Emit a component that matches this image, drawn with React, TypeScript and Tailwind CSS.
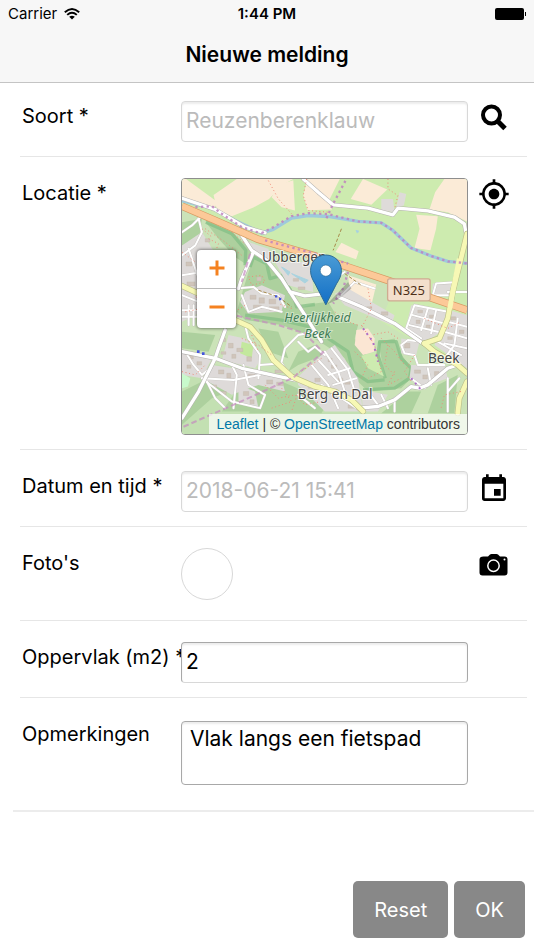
import React, { useState } from "react";
import { MdEvent, MdMyLocation } from "react-icons/md";

const farmland = [
  "M95 48L165 0H335L300 20L262 60L215 86L150 112L105 92Z",
  "M378 0H475L440 70L452 92L378 94L365 50Z",
  "M288 18L335 4L340 95L300 85L270 55Z",
  "M508 60L545 0L618 32L570 78Z",
  "M790 0H858V128L800 100L745 92L762 40Z",
  "M705 108L770 112L765 150L748 215L700 208L715 150Z",
  "M480 192L532 218L524 242L462 220Z",
  "M500 290L585 318L572 372L505 335Z",
];

const forest = [
  "M70 128L150 160L205 210L260 230L270 262L330 330L352 390L400 375L440 370L470 420L530 440L520 480L560 540L612 600L590 490L640 480L655 520L690 570L680 610L660 630L560 640L510 590L490 540L430 500L380 470L300 440L190 425L165 400L185 330L205 265L160 235L110 180Z",
  "M190 600L330 640L340 700H120Z",
  "M350 560L430 530L400 500L350 520L320 580Z",
  "M680 640L720 640L690 705H600Z",
  "M0 130L60 120L50 190L0 200Z",
  "M0 460L100 470L80 520L0 510Z",
  "M80 600L140 640L90 660L0 740V640Z",
  "M230 450L290 460L320 540L260 520Z",
  "M240 640L300 610L440 670L420 705H200Z",
  "M770 620L830 590L820 705H740Z",
];

const builtUp = [
  "M0 200L60 160L100 225L110 320L60 400L0 430Z",
  "M200 190L260 210L270 250L220 230Z",
  "M190 340L240 320L310 350L300 400L200 405L175 370Z",
  "M280 250L390 250L395 340L320 320Z",
  "M460 345L500 330L640 410L630 440L490 380Z",
  "M690 380L800 400L780 460L735 490L670 465Z",
  "M805 395L858 410V570L760 500Z",
  "M660 480L715 490L705 530L660 525Z",
  "M690 560L790 560L800 600L715 630L685 600Z",
  "M430 520L460 500L530 600L545 700H430L350 620L345 600Z",
  "M140 470L190 480L240 540L220 570L120 545Z",
  "M90 560L190 575L300 600L310 640L230 620L150 650L60 600Z",
  "M0 520L90 540L60 600L0 590Z",
  "M170 620L220 640L230 690L170 670Z",
  "M600 60L635 60L640 100L600 95Z",
  "M655 40L675 45L668 80L645 85Z",
  "M755 315L812 310L805 350L752 348Z",
  "M540 635L620 650L590 700L545 700Z",
];

// Narrow residential streets
const streets = [
  "M0 230L40 200L60 160L50 120",
  "M0 290L60 280M20 210L60 330M0 350L50 370M0 395H50M0 415H50M20 380V440M35 380V440",
  "M0 160L30 140L60 110",
  "M10 520L35 560L60 590L90 565",
  "M70 600L100 660L130 690",
  "M150 560L165 590L155 690",
  "M60 600L155 605L235 590",
  "M185 560L200 620L250 650L235 690L150 670L60 600",
  "M190 440L200 480L235 530L230 600",
  "M235 560L300 555L330 600",
  "M300 550L310 510L350 470L400 460",
  "M350 490L380 520L400 505L430 530",
  "M390 560L440 620L470 690",
  "M430 520L470 580L490 640M450 510L500 575L520 640M410 545L470 610",
  "M350 650L400 690M420 620L540 700M440 590L505 570M455 620L525 600",
  "M160 330L215 325L240 345L290 350L310 385M180 350L200 400L240 385L300 400",
  "M460 300L490 280M480 350L520 310L580 330",
  "M700 380L675 450L720 480M700 380L800 400M695 410L790 435M685 440L770 460M740 390L720 455M765 395L750 465",
  "M800 430L858 445M790 460L858 480M830 420L820 500L790 540M770 490L840 530M858 510L790 495",
  "M720 490L680 485L660 500L670 525L700 530L710 560L790 560",
  "M690 600L730 630L790 580M740 570L750 620M800 600V700M835 600L800 640",
  "M755 350L765 315L812 312M800 340H858M755 350H800",
  "M560 640L590 680M600 650L620 690M640 660V700",
];

const mainRoads = [
  "M0 58L100 92L190 145L250 162",
  "M180 170L210 215L255 245L300 300L325 340L370 352L430 345",
  "M215 220L180 300L170 330",
  "M470 355L540 385L640 435L725 495",
  "M365 0L410 40L455 78L560 88L635 108L650 88L740 96L820 115L850 135L858 180",
  "M130 455L110 510L100 540L50 640L0 720",
  "M0 520L100 540L180 570L280 592L340 605",
  "M530 690L590 685L640 665L690 625L715 630L740 620L800 570L830 560",
  "M325 340L370 410L420 490",
];

const yellowRoads = [
  "M0 322L50 345",
  "M160 425L205 445L240 485L275 545L330 595L400 625L460 640L510 665L545 700",
  "M858 165L835 260L815 340L800 420L775 480L730 495",
  "M730 495L760 520L830 560L858 585",
  "M858 610L835 660L830 705",
];

const footpaths = [
  "M150 160L190 195M70 150L130 190L180 230M200 295L240 290L250 310L210 320Z",
  "M260 5L290 60L330 105M375 0L365 50L380 95L440 100",
  "M620 0V30L650 50L640 90",
  "M80 180L110 195L100 220M60 150L90 175",
  "M540 440L580 500L600 580L560 600M600 480L640 520L670 560M620 500L610 560L640 590",
  "M520 520L560 560L540 600M460 400L500 430L530 440M560 330L570 390L540 450",
  "M250 620L290 660L340 650L370 680L420 670M270 690L330 670L300 630M350 640L330 700",
  "M0 580L40 590L70 560M180 480L230 500L270 530M210 470L230 520",
  "M640 580L620 620L660 600M700 530L670 580L690 610M650 480L620 460L570 470",
  "M10 400L60 390L40 350M0 220L40 250M190 380L160 400M330 390L290 375",
  "M840 640L790 650L780 690M730 420L800 450L840 430M420 540L340 590",
];

const buildings = [
  "M205 350h18v12h-18zM232 358h16v16h-16zM262 362h20v14h-20zM215 380h24v10h-24zM262 385h30v10h-30z",
  "M115 480h16v10h-16zM140 495h14v14h-14zM165 510h18v10h-18zM150 528h12v12h-12zM195 535h14v14h-14zM118 520h14v8h-14z",
  "M110 575h16v12h-16zM135 585h12v14h-12zM200 588h20v8h-20zM255 605h18v12h-18zM285 612h20v10h-20zM280 575h24v9h-24z",
  "M20 530h14v12h-14zM45 550h14v10h-14zM15 560h12v10h-12zM90 620h14v10h-14zM115 640h18v10h-18zM185 640h16v12h-16zM205 665h12v12h-12z",
  "M12 250h18v12h-18zM15 310h24v12h-24zM70 180h14v10h-14zM225 295h14v12h-14zM335 300h16v8h-16zM350 325h20v8h-20z",
  "M440 540h12v10h-12zM450 560h16v10h-16zM470 600h14v10h-14zM490 610h16v8h-16zM400 600h16v10h-16zM380 620h14v10h-14zM500 680h18v10h-18z",
  "M710 395h14v8h-14zM745 410h12v8h-12zM705 425h12v10h-12zM735 440h12v8h-12zM810 415h14v10h-14zM835 455h14v10h-14zM800 475h14v8h-14z",
  "M700 575h18v10h-18zM725 590h14v12h-14zM760 580h14v12h-14zM670 495h16v14h-16zM555 385h16v8h-16zM600 400h20v10h-20z",
];

const MapTiles = () => (
  <svg
    viewBox="0 0 858 768"
    preserveAspectRatio="xMidYMid slice"
    className="block h-full w-full"
    fill="none"
    aria-hidden="true"
  >
    <rect width="858" height="768" fill="#cdebb0" />
    <path
      d="M0 90L200 175L430 240L640 320L600 430L720 500L858 560V768H0Z"
      fill="#cbe3b8"
    />
    <path d="M0 540L330 600L540 700V768H0Z" fill="#c3e0b2" />
    <g fill="#fbecd7">
      {farmland.map((d) => (
        <path key={d} d={d} />
      ))}
    </g>
    <path d="M0 0H12L110 72L95 88L0 56Z" fill="#fbecd7" />
    <g fill="#add19e">
      {forest.map((d) => (
        <path key={d} d={d} />
      ))}
    </g>
    <path
      d="M72 130L150 165L192 215L190 260M205 265L215 235L255 255L265 300L300 290L335 350L345 385L400 378M190 410L300 425L385 445M440 480L500 520L515 580L560 610L610 605M545 635L640 630L685 600L690 570L660 540L645 490L595 490L590 530L612 600"
      stroke="#84bf85"
      strokeWidth="10"
      strokeLinejoin="round"
      opacity=".75"
    />
    <g fill="#dedbd9">
      {builtUp.map((d) => (
        <path key={d} d={d} />
      ))}
    </g>
    <path d="M525 455L560 450L580 480L578 520L545 530L520 500Z" fill="#fbe6d3" />
    <path d="M540 532L580 522L608 595L560 570Z" fill="#cdebb0" />
    <path d="M180 490L215 500L210 540L175 525Z" fill="#c3e89d" />
    <path d="M0 585L25 600L18 625L0 630Z" fill="#c8facc" />
    <path
      d="M300 265l25 15l-5 10zM330 285l50 20l-10 8zM524 155l8 2l-4 6z"
      fill="#aad3df"
      stroke="#aad3df"
      strokeWidth="3"
    />
    <g fill="#d0c5bb" stroke="#bfb3a8" strokeWidth="1">
      {buildings.map((d) => (
        <path key={d} d={d} />
      ))}
    </g>

    {/* Canal along the top */}
    <path
      d="M0 66L90 88L160 125L240 163L275 152L330 118L380 110L440 113L530 128L600 132L635 155L690 208L750 232L800 248L858 254"
      stroke="#9fcbdc"
      strokeWidth="10"
      strokeLinejoin="round"
    />

    <g strokeLinejoin="round" strokeLinecap="round">
      <g stroke="#c5c1be" strokeWidth="8">
        {streets.map((d) => (
          <path key={d} d={d} />
        ))}
      </g>
      <g stroke="#fff" strokeWidth="6">
        {streets.map((d) => (
          <path key={d} d={d} />
        ))}
      </g>
      <g stroke="#b5b2b0" strokeWidth="13">
        {mainRoads.map((d) => (
          <path key={d} d={d} />
        ))}
      </g>
      <g stroke="#fff" strokeWidth="10">
        {mainRoads.map((d) => (
          <path key={d} d={d} />
        ))}
      </g>
      <g stroke="#bcc08a" strokeWidth="18">
        {yellowRoads.map((d) => (
          <path key={d} d={d} />
        ))}
      </g>
      <g stroke="#f7f8b5" strokeWidth="14">
        {yellowRoads.map((d) => (
          <path key={d} d={d} />
        ))}
      </g>
    </g>
    <path d="M0 82L100 125L230 182L400 232L520 272L640 312L750 358L858 395" stroke="#d79a62" strokeWidth="23" />
    <path d="M0 82L100 125L230 182L400 232L520 272L640 312L750 358L858 395" stroke="#fcc998" strokeWidth="19" />
    <path d="M835 240L815 340L806 392" stroke="#f7f8b5" strokeWidth="15" />

    <g stroke="#ee8a78" strokeWidth="3" strokeDasharray="3 8">
      {footpaths.map((d) => (
        <path key={d} d={d} />
      ))}
    </g>
    <path
      d="M230 335L290 355L330 385M480 150L455 215M490 285L540 320"
      stroke="#a88a4a"
      strokeWidth="3"
      strokeDasharray="10 6"
    />
    {/* Municipal boundaries */}
    <g stroke="#bf83bf" strokeWidth="7" strokeDasharray="7 10" opacity=".85">
      <path d="M240 163L275 145L330 112L380 103L440 106L530 128L600 132L635 155L690 208L750 232L800 248L858 254" />
      <path d="M435 118L455 75L495 0" />
      <path d="M40 85L90 82L120 105L180 145L240 165" />
      <path d="M250 185L400 225L500 255" />
      <path d="M500 280L485 330L455 375" />
    </g>
    <g stroke="#c58bbf" strokeWidth="6" strokeDasharray="17 9" opacity=".7">
      <path d="M205 225L180 310" />
      <path d="M165 412L290 440L370 465L425 522L335 598L200 660L0 748" />
    </g>
    <path
      d="M545 450L575 490L590 550M690 600L720 635"
      stroke="#ad6ec6"
      strokeWidth="6"
      strokeDasharray="6 12"
    />
    <path d="M45 516h8v8h-8zM60 522h8v8h-8zM280 350h7v7h-7zM292 358h7v7h-7z" fill="#4455dd" />
    <path d="M436 378L500 310L510 330L470 362Z" fill="#444" opacity=".3" />

    <rect x="619" y="301" width="128" height="66" rx="6" fill="#f3dfcc" stroke="#cfab91" strokeWidth="4" />
    <g
      fontFamily="'Noto Sans', sans-serif"
      fontSize="41"
      textAnchor="middle"
      stroke="#fff"
      strokeOpacity=".7"
      strokeWidth="6"
      paintOrder="stroke"
      fill="#444"
    >
      <text x="241" y="250" textAnchor="start">
        Ubbergen
      </text>
      <text x="461" y="664">Berg en Dal</text>
      <text x="788" y="555">Beek</text>
      <g fill="#3d7a55" fontStyle="italic" fontSize="38" strokeOpacity=".4">
        <text x="408" y="430">Heerlijkheid</text>
        <text x="408" y="479">Beek</text>
      </g>
      <text x="683" y="348" fontSize="39" fill="#4d2f18" stroke="none">
        N325
      </text>
    </g>

    {/* Marker */}
    <defs>
      <linearGradient id="pin" x1="0" y1="0" x2="0" y2="1">
        <stop offset="0" stopColor="#4a9bd5" />
        <stop offset="1" stopColor="#126fc6" />
      </linearGradient>
    </defs>
    <path
      d="M433 229C406 229 387 250 387 276C387 292 393 303 401 316L433 379L465 316C473 303 480 292 480 276C480 250 460 229 433 229Z"
      fill="url(#pin)"
      stroke="#2e6c97"
      strokeWidth="3"
    />
    <circle cx="433" cy="276" r="17" fill="#fff" stroke="#2e6c97" strokeWidth="2" />
  </svg>
);

const LocationMap = () => (
  <div className="relative h-[257px] overflow-hidden rounded-[4px] border border-[#8e8e8e]">
    <MapTiles />
    <div className="absolute left-[15px] top-[71px] flex flex-col rounded-[4px] bg-white shadow-[0_0_3px_1px_rgba(0,0,0,0.4)]">
      <button
        type="button"
        aria-label="Zoom in"
        className="flex h-[39px] w-[39px] items-center justify-center border-b border-[#bbb] pb-[2px]"
      >
        <svg viewBox="0 0 16 16" className="h-4 w-4" stroke="#f58220" strokeWidth="3">
          <path d="M8 0.5v15M0.5 8h15" />
        </svg>
      </button>
      <button
        type="button"
        aria-label="Zoom out"
        className="flex h-[39px] w-[39px] items-center justify-center pb-[2px]"
      >
        <svg viewBox="0 0 16 16" className="h-4 w-4" stroke="#f58220" strokeWidth="3">
          <path d="M0.5 7h15" />
        </svg>
      </button>
    </div>
    <p className="absolute bottom-0 right-0 whitespace-nowrap bg-white/70 px-[7px] font-['Liberation_Sans',sans-serif] text-[14px] leading-[20px] text-[#333]">
      <a href="#" className="text-[#0078a8]">
        Leaflet
      </a>{" "}
      | ©{" "}
      <a href="#" className="text-[#0078a8]">
        OpenStreetMap
      </a>{" "}
      contributors
    </p>
  </div>
);

const SearchIcon = () => (
  <svg viewBox="0 0 32 32" className="h-8 w-8" fill="none" stroke="currentColor">
    <circle cx="13.5" cy="14" r="8.5" strokeWidth="4" />
    <path d="M19.5 20L27 27.5" strokeWidth="5" />
  </svg>
);

const CameraIcon = () => (
  <svg viewBox="0 0 32 32" className="h-8 w-8">
    <path
      d="M5.5 8.500H10L12 6.600Q12.600 6 13.500 6H18.500Q19.400 6 20 6.600L22 8.500H26.500Q29.500 8.500 29.500 11.500V24.500Q29.500 27.500 26.500 27.500H4.500Q1.500 27.500 1.500 24.500V11.500Q1.500 8.500 5.500 8.500Z"
      fill="currentColor"
    />
    <circle cx="15.500" cy="17.800" r="5.700" fill="none" stroke="#fff" strokeWidth="1.500" />
    <rect x="25.500" y="10.500" width="2" height="2" rx="1" fill="#fff" />
  </svg>
);

const WifiIcon = () => (
  <svg viewBox="0 0 16 12" className="h-3 w-4" fill="none" stroke="#000" strokeWidth="1.9">
    <path d="M0.8 4.3Q8 -2.3 15.2 4.3M3.2 6.9Q8 2.5 12.8 6.9" />
    <path d="M8 11.5L5.2 8.8Q8 6.6 10.8 8.8Z" fill="#000" stroke="none" />
  </svg>
);

interface RowProps {
  label: string;
  htmlFor?: string;
  action?: React.ReactNode;
  className: string;
  children: React.ReactNode;
}

const Row = ({ label, htmlFor, action, className, children }: RowProps) => (
  <div className={`mx-[7px] flex items-start ${className}`}>
    <label
      htmlFor={htmlFor}
      className="w-[161px] shrink-0 whitespace-nowrap pl-[2px] leading-[30px]"
    >
      {label}
    </label>
    <div className="min-w-0 flex-1">{children}</div>
    <div className="mr-[7px] flex w-[52px] shrink-0 justify-center">{action}</div>
  </div>
);

const divider = "border-b border-[#e6e6e6]";
const field =
  "block w-full rounded-[4px] border bg-white text-[21px] shadow-[inset_0_2px_2px_rgba(0,0,0,0.08)] outline-none placeholder:text-[#bbb]";

const App = () => {
  const [area, setArea] = useState("2");
  const [remarks, setRemarks] = useState("Vlak langs een fietspad");

  return (
    <div className="flex min-h-screen flex-col bg-white font-['Inter',sans-serif] text-[20px] text-black">
      <header className="border-b border-[#c4c4c4] bg-[#f7f7f7]">
        <div className="grid h-7 grid-cols-3 items-center px-2 text-[15px]">
          <div className="flex items-center gap-[7px]">
            Carrier <WifiIcon />
          </div>
          <div className="text-center font-semibold">1:44 PM</div>
          <div className="flex items-center justify-end">
            <div className="h-3 w-[29px] rounded-[2px] bg-black" />
            <div className="ml-px h-1 w-px bg-black" />
          </div>
        </div>
        <h1 className="h-[54px] text-center text-[21px] font-semibold leading-[53px]">
          Nieuwe melding
        </h1>
      </header>

      <form id="melding" className="ml-[13px] border-b-2 border-[#ececec]">
        <Row
          label="Soort *"
          htmlFor="soort"
          className={`pt-[18px] pb-[14px] ${divider}`}
          action={
            <button type="button" aria-label="Zoeken">
              <SearchIcon />
            </button>
          }
        >
          <input
            id="soort"
            readOnly
            placeholder="Reuzenberenklauw"
            className={`${field} h-[41px] border-[#d8d8d8] px-1 pb-[2px]`}
          />
        </Row>

        <Row
          label="Locatie *"
          className={`pt-[21px] pb-[14px] ${divider}`}
          action={
            <button type="button" aria-label="Mijn locatie">
              <MdMyLocation size={32} />
            </button>
          }
        >
          <LocationMap />
        </Row>

        <Row
          label="Datum en tijd *"
          htmlFor="datum"
          className={`pt-[21px] pb-[14px] ${divider}`}
          action={
            <button type="button" aria-label="Datum kiezen" className="pt-[2px]">
              <MdEvent size={32} />
            </button>
          }
        >
          <input
            id="datum"
            readOnly
            placeholder="2018-06-21 15:41"
            className={`${field} h-[41px] border-[#d8d8d8] px-1 pb-[2px]`}
          />
        </Row>

        <Row
          label="Foto's"
          className={`pt-[21px] pb-5 ${divider}`}
          action={
            <button type="button" aria-label="Foto maken">
              <CameraIcon />
            </button>
          }
        >
          <div className="h-[52px] w-[52px] rounded-full border border-[#d8d8d8]" />
        </Row>

        <Row
          label="Oppervlak (m2) *"
          htmlFor="oppervlak"
          className={`pt-[21px] pb-[14px] ${divider}`}
        >
          <input
            id="oppervlak"
            value={area}
            onChange={(e) => setArea(e.target.value)}
            className={`${field} h-[41px] border-[#a8a8a8] border-b-[#d8d8d8] px-1 pb-[2px]`}
          />
        </Row>

        <Row label="Opmerkingen" htmlFor="opmerkingen" className="pt-[21px] pb-[25px]">
          <textarea
            id="opmerkingen"
            value={remarks}
            onChange={(e) => setRemarks(e.target.value)}
            className={`${field} mt-[2px] h-16 resize-none border-[#a8a8a8] px-2 py-[2px] leading-[30px]`}
          />
        </Row>
      </form>

      <footer className="mt-auto flex justify-end gap-[6px] pt-5 pr-[9px] pb-3">
        <button
          type="reset"
          form="melding"
          className="h-[57px] rounded-[5px] bg-[#888] px-[21px] text-white"
        >
          Reset
        </button>
        <button
          type="submit"
          form="melding"
          className="h-[57px] rounded-[5px] bg-[#888] px-[21px] text-white"
        >
          OK
        </button>
      </footer>
    </div>
  );
};

export default App;
